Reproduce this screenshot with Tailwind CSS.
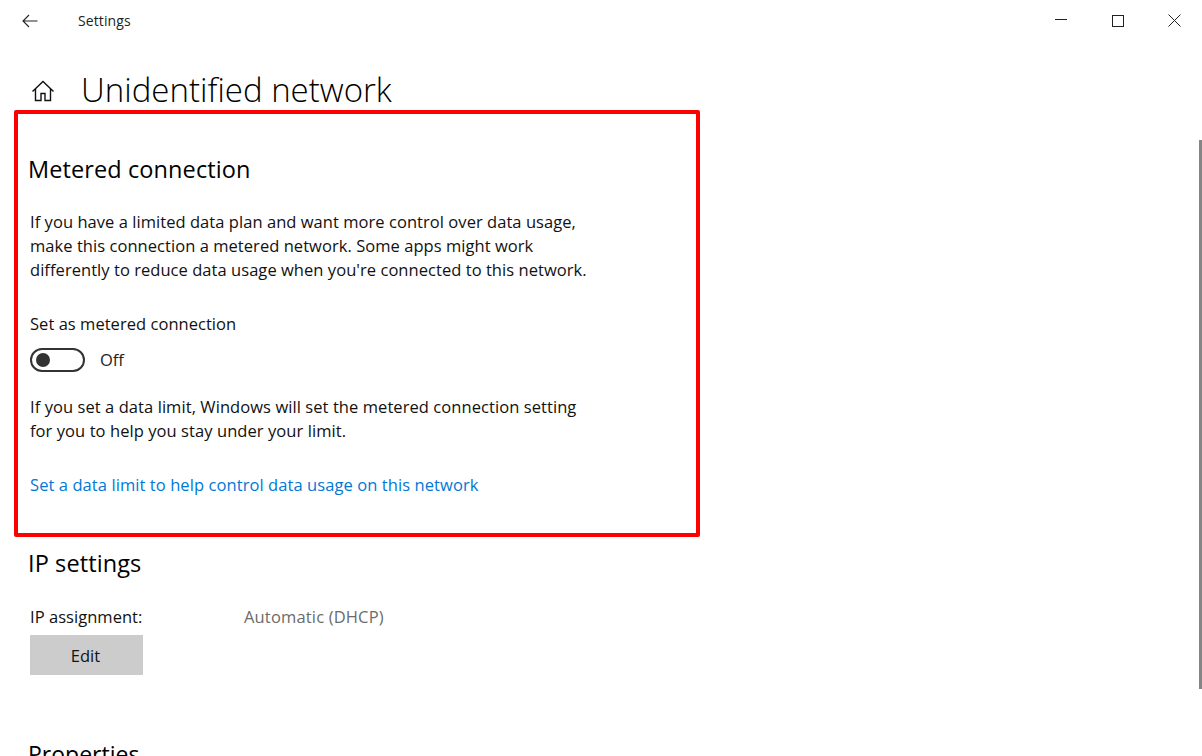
<!DOCTYPE html>
<html lang="en">
<head>
    <meta charset="UTF-8">
    <title>Settings</title>
    <script src="https://cdn.jsdelivr.net/npm/@tailwindcss/browser@4"></script>
</head>
<body class="bg-white">
    <div class="relative w-[1202px] h-[756px] overflow-hidden bg-white text-black font-['Open_Sans',sans-serif]">
        <!-- title bar -->
        <header class="flex items-center h-[41px]">
            <div class="w-[78px] pl-[22px]">
                <svg width="16" height="14" viewBox="0 0 16 14" fill="none" stroke="#222" stroke-width="1.1"><path d="M15.5 7H1M7 1L1 7l6 6"/></svg>
            </div>
            <span class="text-[14px] leading-[18px] tracking-[0.1px] text-[#222]">Settings</span>
            <div class="ml-auto flex items-center -mr-[1px]">
                <div class="w-[57px] flex justify-center"><div class="w-[12px] h-px bg-[#222] -mt-[2px]"></div></div>
                <div class="w-[57px] flex justify-center"><div class="w-[12px] h-[12px] border border-[#222]"></div></div>
                <div class="w-[57px] flex justify-center">
                    <svg width="13" height="13" viewBox="0 0 13 13" fill="none" stroke="#222" stroke-width="1"><path d="M.5.5l12 12M12.5.5l-12 12"/></svg>
                </div>
            </div>
        </header>

        <!-- page title -->
        <div class="flex items-center h-[69px] pt-[29px] pl-[31px]">
            <svg width="24" height="24" viewBox="0 0 24 24" fill="none" stroke="#111" stroke-width="1.4" class="mt-[2px]"><path d="M1.5 12.5L12 2.5l10.5 10M4.5 10v11.5h5.5v-7h4v7h5.5V10"/></svg>
            <h1 class="ml-[26px] text-[33px] leading-[44px] font-light">Unidentified network</h1>
        </div>

        <main class="pl-[30px]">
            <h2 class="-ml-[2px] mt-[41px] text-[23.5px] leading-[36px] tracking-[0.1px]">Metered connection</h2>
            <p class="mt-[23px] text-[16.5px] leading-[24px] tracking-[0.05px] whitespace-nowrap text-[#111]">If you have a limited data plan and want more control over data usage,<br>make this connection a metered network. Some apps might work<br>differently to reduce data usage when you're connected to this network.</p>
            <p class="mt-[30px] text-[16.5px] leading-[24px] tracking-[0.04px] text-[#111]">Set as metered connection</p>
            <div class="mt-[12px] flex items-center h-[24px]">
                <div class="w-[55px] h-[24px] rounded-full border-2 border-[#333] flex items-center pl-[4px]">
                    <div class="w-[14px] h-[14px] rounded-full bg-[#333]"></div>
                </div>
                <span class="ml-[15px] text-[16.5px] leading-[24px] text-[#222]">Off</span>
            </div>
            <p class="mt-[23px] text-[16.5px] leading-[24px] tracking-[0.07px] text-[#111] whitespace-nowrap">If you set a data limit, Windows will set the metered connection setting<br>for you to help you stay under your limit.</p>
            <a class="block mt-[30px] text-[16.5px] leading-[24px] tracking-[0.08px] text-[#0078d7]">Set a data limit to help control data usage on this network</a>

            <h2 class="-ml-[2px] mt-[48px] text-[23.5px] leading-[36px] tracking-[0.1px]">IP settings</h2>
            <div class="mt-[24px] flex h-[24px] text-[16.5px] leading-[24px] tracking-[0.04px]">
                <span class="w-[214px] text-[#111]">IP assignment:</span>
                <span class="tracking-[0.16px] text-[#6b6b6b]">Automatic (DHCP)</span>
            </div>
            <button class="block mt-[6px] w-[113px] h-[40px] pt-[3px] pr-[2px] bg-[#cccccc] text-[16.5px] text-[#111]">Edit</button>
            <h2 class="-ml-[2px] mt-[61px] text-[23px] leading-[36px]">Properties</h2>
        </main>

        <!-- annotation box drawn over the screenshot -->
        <div class="absolute left-[14px] top-[110px] w-[686px] h-[427px] border-[4px] border-[#ff0000] rounded-[2px]"></div>
        <!-- scrollbar -->
        <div class="absolute right-0 top-[140px] w-[3px] h-[549px] bg-[#858585]"></div>
    </div>
</body>
</html>
